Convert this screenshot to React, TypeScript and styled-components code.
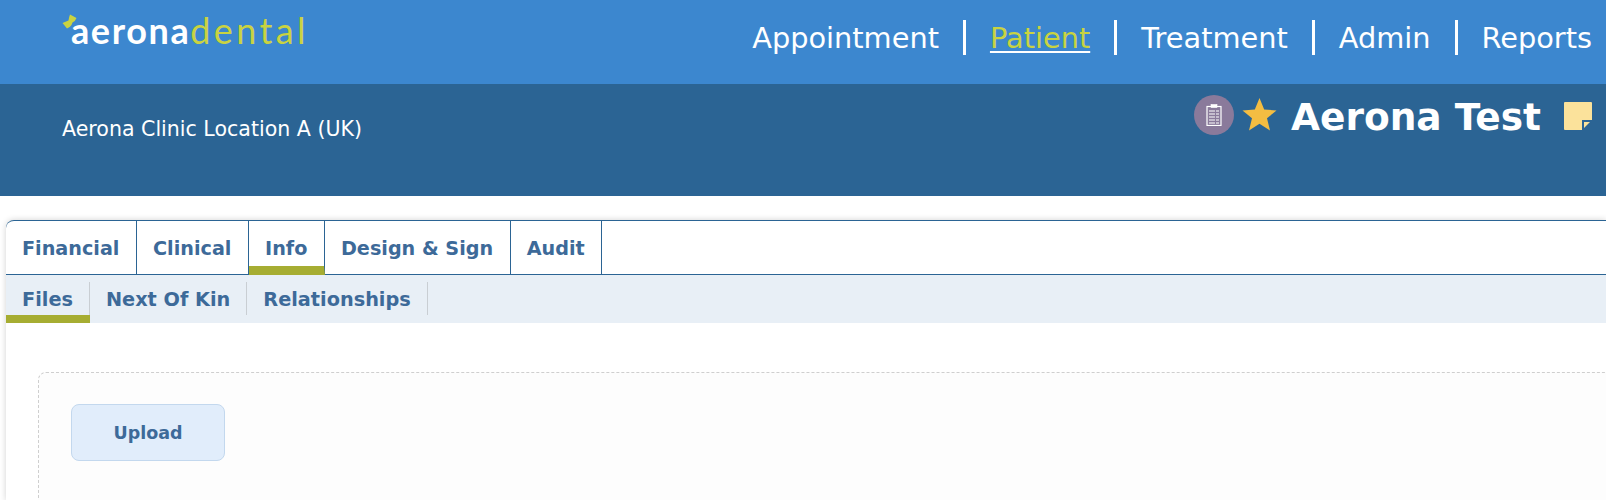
import React from "react";
import styled, { createGlobalStyle } from "styled-components";

const GlobalStyle = createGlobalStyle`
  html, body {
    margin: 0;
    padding: 0;
    height: 500px;
    overflow: hidden;
    background: #fff;
    font-family: "DejaVu Sans", "Liberation Sans", sans-serif;
  }
`;

const TopBar = styled.header`
  height: 84px;
  background: #3c87cf;
  display: flex;
  justify-content: space-between;
  padding: 0 14px 0 62px;
`;

const Logo = styled.div`
  position: relative;
  height: 32px;
  margin-top: 14px;
  padding-left: 9px;
  display: flex;
  align-items: baseline;
  font-family: Lato, "Noto Sans", sans-serif;
  font-size: 36px;
  line-height: 32px;
`;

const LogoWhite = styled.span`
  color: #fff;
  font-weight: 700;
  letter-spacing: 1.6px;
`;

const LogoGreen = styled.span`
  color: #c9d341;
  font-weight: 400;
  letter-spacing: 3.4px;
`;

const LogoBow = styled.svg`
  position: absolute;
  left: 0;
  top: 0;
`;

const MainNav = styled.nav`
  display: flex;
  align-items: flex-start;
  padding-top: 20px;
`;

const NavItem = styled.a<{ $active?: boolean }>`
  font-size: 28.8px;
  line-height: 33px;
  color: ${(p) => (p.$active ? "#c9d341" : "#fff")};
  text-decoration: ${(p) => (p.$active ? "underline" : "none")};
  text-decoration-color: #fff;
  text-decoration-thickness: 2px;
  text-underline-offset: 3px;
  padding: 2px 24px 0 24px;
  border-left: 3px solid #fff;

  &:first-child {
    border-left: none;
  }

  &:last-child {
    padding-right: 0;
  }
`;

const SubBar = styled.div`
  height: 112px;
  background: #2b6494;
  display: flex;
  justify-content: space-between;
  padding: 0 14px 0 62px;
`;

const ClinicName = styled.div`
  margin-top: 33px;
  font-size: 20.55px;
  line-height: 24px;
  color: #fff;
`;

const PatientInfo = styled.div`
  display: flex;
  align-items: flex-start;
`;

const RoundIcon = styled.div`
  width: 40px;
  height: 40px;
  margin-top: 11px;
  border-radius: 50%;
  background: #8a7a9b;
  display: flex;
  align-items: center;
  justify-content: center;
`;

const StarIcon = styled.svg`
  margin: 13px 0 0 8px;
`;

const PatientName = styled.div`
  margin: 10px 23px 0 14px;
  font-size: 37.5px;
  line-height: 46px;
  font-weight: 700;
  color: #fff;
`;

const NoteIcon = styled.svg`
  margin-top: 18px;
`;

const Panel = styled.main`
  margin: 24px 0 0 6px;
  height: 280px;
  border-radius: 8px 0 0 0;
  border-top: 1px solid #2b6494;
  box-shadow: 0 0 6px rgba(0, 0, 0, 0.18);
  background: #fff;
`;

const Tabs = styled.div`
  display: flex;
  height: 53px;
  border-bottom: 1px solid #2b6494;
`;

const Tab = styled.div<{ $active?: boolean }>`
  display: flex;
  align-items: center;
  padding: 0 16.6px 0 16px;
  box-sizing: border-box;
  height: 54px;
  font-size: 19.2px;
  font-weight: 700;
  color: #3d6a99;
  border-right: 1px solid #2b6494;
  border-bottom: ${(p) => (p.$active ? "9px solid #a6ad32" : "none")};
  padding-top: ${(p) => (p.$active ? "9px" : "0")};
`;

const SubTabs = styled.div`
  display: flex;
  height: 48px;
  background: #e8eff6;
`;

const SubTab = styled.div<{ $active?: boolean }>`
  position: relative;
  display: flex;
  align-items: center;
  box-sizing: border-box;
  height: 48px;
  padding: 8px 17px 0 16px;
  font-size: 19.3px;
  font-weight: 700;
  color: #3d6a99;
  border-bottom: 8px solid ${(p) => (p.$active ? "#a6ad32" : "transparent")};

  &::after {
    content: "";
    position: absolute;
    right: 0;
    top: 7px;
    height: 33px;
    width: 1px;
    background: #c9ced3;
  }
`;

const Content = styled.div`
  padding: 49px 0 0 32px;
`;

const DropZone = styled.div`
  height: 140px;
  box-sizing: border-box;
  border: 1px dashed #cfcfcf;
  border-right: none;
  border-radius: 8px 0 0 0;
  background: #fdfdfd;
  padding: 31px 32px;
`;

const UploadButton = styled.button`
  display: block;
  width: 154px;
  height: 57px;
  border: 1px solid #c3d8ee;
  border-radius: 8px;
  background: #e1edfb;
  color: #3d6a99;
  font-family: inherit;
  font-size: 17.5px;
  font-weight: 700;
`;

export default function App() {
  return (
    <>
      <GlobalStyle />
      <TopBar>
        <Logo>
          <LogoBow width="15" height="15" viewBox="0 0 15 15">
            <path d="M8 0.5 L14.5 4 Q13.5 7 10.5 8.5 L9.5 11 Q7.5 14 5 14.5 L0.5 9 Q3.5 7.5 6.5 6.5 Q7 3 8 0.5 Z" fill="#c9d341" />
          </LogoBow>
          <LogoWhite>aerona</LogoWhite>
          <LogoGreen>dental</LogoGreen>
        </Logo>
        <MainNav>
          <NavItem>Appointment</NavItem>
          <NavItem $active>Patient</NavItem>
          <NavItem>Treatment</NavItem>
          <NavItem>Admin</NavItem>
          <NavItem>Reports</NavItem>
        </MainNav>
      </TopBar>
      <SubBar>
        <ClinicName>Aerona Clinic Location A (UK)</ClinicName>
        <PatientInfo>
          <RoundIcon>
            <svg width="16" height="22" viewBox="0 0 16 22" fill="none" stroke="#fff">
              <rect x="1" y="2.5" width="14" height="19" strokeWidth="1.2" />
              <rect x="5" y="0.5" width="6" height="3" fill="#fff" strokeWidth="0.6" />
              <path d="M3 7h10M3 10h10M3 13h10M3 16h10M3 19h10" strokeWidth="1.2" strokeDasharray="6 1 3" />
            </svg>
          </RoundIcon>
          <StarIcon width="35" height="35" viewBox="0 0 35 35">
            <path d="M17.5 1 L22.2 12.6 L34.5 13.4 L25 21.3 L28 33.5 L17.5 26.8 L7 33.5 L10 21.3 L0.5 13.4 L12.8 12.6 Z" fill="#f4bd42" />
          </StarIcon>
          <PatientName>Aerona Test</PatientName>
          <NoteIcon width="28" height="28" viewBox="0 0 28 28">
            <path d="M1 0 H27 a1 1 0 0 1 1 1 V18 L18 28 H1 a1 1 0 0 1 -1 -1 V1 a1 1 0 0 1 1 -1 Z" fill="#fbe29b" />
            <path d="M19 28 V19 H28" fill="none" stroke="#2b6494" strokeWidth="2" />
          </NoteIcon>
        </PatientInfo>
      </SubBar>
      <Panel>
        <Tabs>
          <Tab>Financial</Tab>
          <Tab>Clinical</Tab>
          <Tab $active>Info</Tab>
          <Tab>Design &amp; Sign</Tab>
          <Tab>Audit</Tab>
        </Tabs>
        <SubTabs>
          <SubTab $active>Files</SubTab>
          <SubTab>Next Of Kin</SubTab>
          <SubTab>Relationships</SubTab>
        </SubTabs>
        <Content>
          <DropZone>
            <UploadButton>Upload</UploadButton>
          </DropZone>
        </Content>
      </Panel>
    </>
  );
}
